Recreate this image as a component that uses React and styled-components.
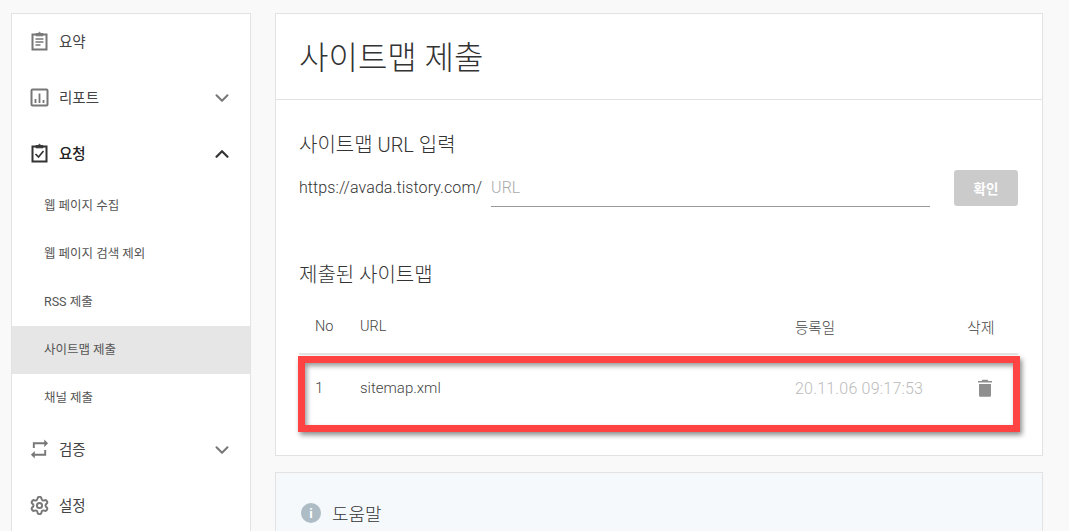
import React from "react";
import styled, { createGlobalStyle } from "styled-components";
import { ChevronDown, ChevronUp, Settings } from "lucide-react";

const GlobalStyle = createGlobalStyle`
  html, body {
    margin: 0;
    height: 531px;
    overflow: hidden;
    background: #f9f9f9;
    font-family: Roboto, "Noto Sans CJK KR", sans-serif;
    color: #333;
  }
`;

const Page = styled.div`
  display: flex;
  align-items: flex-start;
  gap: 24px;
  padding: 13px 26px 0 11px;
  height: 518px;
  overflow: hidden;
`;

const Sidebar = styled.nav`
  width: 240px;
  flex: none;
  box-sizing: border-box;
  background: #fff;
  border: 1px solid #e2e2e2;
  height: 540px;
`;

const MenuRow = styled.div`
  display: flex;
  align-items: center;
  height: 56px;
  padding: 0 17px 0 18px;
  font-size: 14.5px;
  font-weight: ${(p) => (p.$active ? 500 : 400)};
  color: ${(p) => (p.$active ? "#222" : "#444")};
  svg.menu-icon {
    flex: none;
    margin: 0 10px 2px 0;
    color: ${(p) => (p.$active ? "#333" : "#777")};
  }
`;

const MenuLabel = styled.span`
  flex: 1;
  padding-bottom: 3px;
`;

const SubRow = styled.div`
  display: flex;
  align-items: center;
  box-sizing: border-box;
  height: 48px;
  padding: 0 0 4px 32px;
  font-size: 12.5px;
  color: #555;
  background: ${(p) => (p.$selected ? "#e6e6e6" : "transparent")};
`;

const Main = styled.main`
  flex: 1;
  min-width: 0;
  display: flex;
  flex-direction: column;
  gap: 16px;
`;

const Card = styled.section`
  background: #fff;
  border: 1px solid #e2e2e2;
`;

const Header = styled.header`
  box-sizing: border-box;
  height: 86px;
  display: flex;
  align-items: center;
  padding: 0 23px 3px;
  border-bottom: 1px solid #e2e2e2;
  h1 {
    margin: 0;
    font-size: 32px;
    font-weight: 300;
    color: #333;
  }
`;

const Body = styled.div`
  padding: 32px 24px 0 23px;
  height: 323px;
`;

const SectionTitle = styled.h2`
  margin: 0;
  font-size: 20px;
  line-height: 26px;
  font-weight: 300;
  color: #333;
`;

const InputRow = styled.div`
  display: flex;
  align-items: center;
  margin-top: 12px;
  height: 36px;
`;

const Domain = styled.span`
  font-size: 16px;
  font-weight: 300;
  letter-spacing: 0.08px;
  color: #333;
  margin-right: 9px;
  padding-bottom: 2px;
`;

const UrlInput = styled.input`
  width: 439px;
  height: 37px;
  box-sizing: border-box;
  border: 0;
  border-bottom: 1px solid #999;
  outline: none;
  font: 300 16px Roboto, sans-serif;
  padding: 0;
  background: transparent;
  &::placeholder {
    color: #aaa;
  }
`;

const ConfirmButton = styled.button`
  width: 64px;
  height: 36px;
  margin-left: auto;
  border: 0;
  border-radius: 3px;
  background: #cbcbcb;
  color: #fff;
  font: 700 13.5px Roboto, "Noto Sans CJK KR", sans-serif;
`;

const ListTitle = styled(SectionTitle)`
  margin-top: 56px;
`;

const Table = styled.div`
  position: relative;
  margin-top: 12px;
`;

const Row = styled.div`
  display: grid;
  grid-template-columns: 45px 435px 172px 1fr;
  align-items: center;
  height: ${(p) => p.$h}px;
  font-size: ${(p) => (p.$head ? "14.5px" : "15px")};
  font-weight: 300;
  color: #444;
  border-bottom: ${(p) => (p.$head ? "2px solid #e4e4e4" : "none")};
  padding-left: 16px;
  box-sizing: border-box;
`;

const DateCell = styled.span`
  color: #bbb;
  font-size: 16px;
  letter-spacing: 0.2px;
`;

const DeleteCell = styled.span`
  display: flex;
  padding-left: ${(p) => (p.$icon ? "10px" : "0")};
  font-size: 15px;
  color: #444;
`;

const Highlight = styled.div`
  position: absolute;
  left: -1px;
  right: -2px;
  top: 56px;
  height: 76px;
  box-sizing: border-box;
  border: 7px solid #ff4242;
  box-shadow: 2px 3px 5px rgba(0, 0, 0, 0.45), inset 2px 3px 5px rgba(0, 0, 0, 0.4);
`;

const HelpCard = styled(Card)`
  background: #f5f9fc;
  padding: 27px 25px;
  height: 120px;
`;

const HelpTitle = styled.div`
  display: flex;
  align-items: center;
  gap: 11px;
  font-size: 18px;
  font-weight: 300;
  color: #333;
`;

const InfoDot = styled.span`
  width: 20px;
  height: 20px;
  border-radius: 50%;
  background: #aebcc6;
  color: #fff;
  font-size: 13px;
  font-weight: 700;
  display: flex;
  align-items: center;
  justify-content: center;
`;

const ClipboardIcon = ({ checked }) => (
  <svg className="menu-icon" width="19" height="20" viewBox="0 0 19 20" fill="none" stroke="currentColor" strokeWidth="2">
    <path d="M6 3.500H2.500v15h14v-15H13" />
    <path d="M6 4.800V2.600h2l1.500-1.300 1.500 1.300h2v2.200z" strokeWidth="1" fill="currentColor" />
    {checked ? (
      <path d="M5.500 11l3 3 5-6" strokeWidth="1.700" />
    ) : (
      <path d="M5.500 8h8M5.500 11h8M5.500 14h5" strokeWidth="1.500" />
    )}
  </svg>
);

const ReportIcon = () => (
  <svg className="menu-icon" width="19" height="19" viewBox="0 0 19 19" fill="none" stroke="currentColor">
    <rect x="1.500" y="1.500" width="16" height="16" rx="1" strokeWidth="2" />
    <path d="M5.500 15v-4M9.500 15V5.500M13.500 15v-3" strokeWidth="1.800" />
  </svg>
);

const RepeatIcon = () => (
  <svg className="menu-icon" width="19" height="20" viewBox="2 1.500 20 21" fill="currentColor">
    <path d="M7 7h10v3l4-4-4-4v3H5v6h2V7zm10 10H7v-3l-4 4 4 4v-3h12v-6h-2v4z" />
  </svg>
);

const TrashIcon = () => (
  <svg width="16" height="18" viewBox="0 0 16 18" fill="#8f8f8f">
    <path d="M5.500 0.800h5l1 1.200H15v1.600H1V2h3.500z" />
    <path d="M2 5h12v11.200c0 .9-.7 1.600-1.600 1.600H3.600c-.9 0-1.600-.7-1.600-1.600z" />
  </svg>
);

const subItems = ["웹 페이지 수집", "웹 페이지 검색 제외", "RSS 제출", "사이트맵 제출", "채널 제출"];

export default function App() {
  return (
    <Page>
      <GlobalStyle />
      <Sidebar>
        <MenuRow>
          <ClipboardIcon />
          <MenuLabel>요약</MenuLabel>
        </MenuRow>
        <MenuRow>
          <ReportIcon />
          <MenuLabel>리포트</MenuLabel>
          <ChevronDown size={22} strokeWidth={2.2} color="#777" />
        </MenuRow>
        <MenuRow $active>
          <ClipboardIcon checked />
          <MenuLabel>요청</MenuLabel>
          <ChevronUp size={22} strokeWidth={2.4} color="#333" />
        </MenuRow>
        {subItems.map((item) => (
          <SubRow key={item} $selected={item === "사이트맵 제출"}>
            {item}
          </SubRow>
        ))}
        <MenuRow>
          <RepeatIcon />
          <MenuLabel>검증</MenuLabel>
          <ChevronDown size={22} strokeWidth={2.2} color="#777" />
        </MenuRow>
        <MenuRow>
          <Settings className="menu-icon" size={19} viewBox="1 1 22 22" strokeWidth={2.3} />
          <MenuLabel>설정</MenuLabel>
        </MenuRow>
      </Sidebar>
      <Main>
        <Card>
          <Header>
            <h1>사이트맵 제출</h1>
          </Header>
          <Body>
            <SectionTitle>사이트맵 URL 입력</SectionTitle>
            <InputRow>
              <Domain>https://avada.tistory.com/</Domain>
              <UrlInput placeholder="URL" />
              <ConfirmButton>확인</ConfirmButton>
            </InputRow>
            <ListTitle>제출된 사이트맵</ListTitle>
            <Table>
              <Row $head $h={55}>
                <span>No</span>
                <span>URL</span>
                <span>등록일</span>
                <DeleteCell>삭제</DeleteCell>
              </Row>
              <Row $h={66}>
                <span>1</span>
                <span>sitemap.xml</span>
                <DateCell>20.11.06 09:17:53</DateCell>
                <DeleteCell $icon>
                  <TrashIcon />
                </DeleteCell>
              </Row>
              <Highlight />
            </Table>
          </Body>
        </Card>
        <HelpCard>
          <HelpTitle>
            <InfoDot>i</InfoDot>
            도움말
          </HelpTitle>
        </HelpCard>
      </Main>
    </Page>
  );
}
